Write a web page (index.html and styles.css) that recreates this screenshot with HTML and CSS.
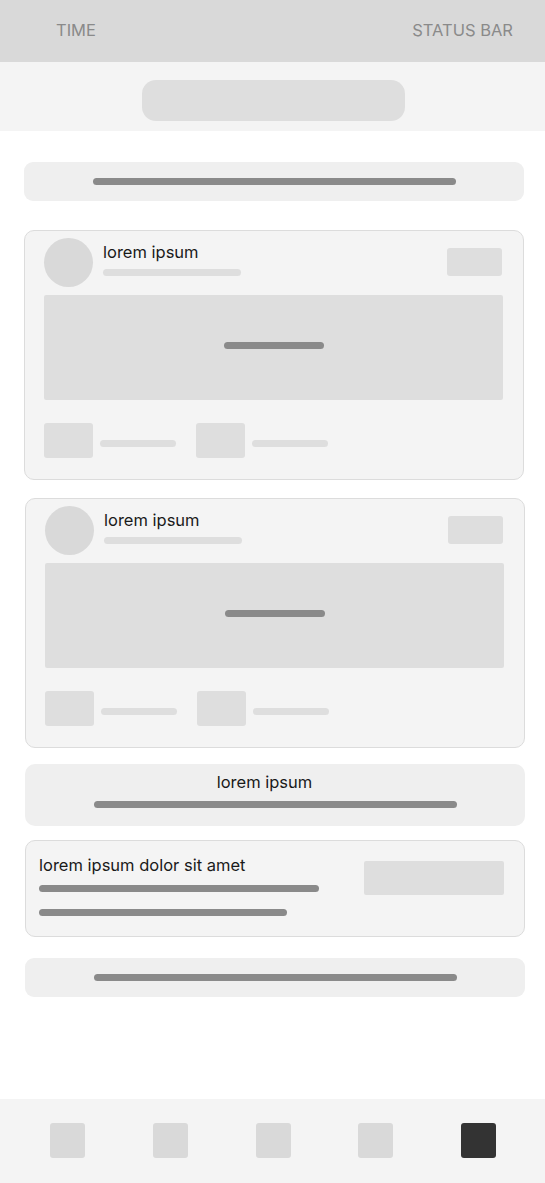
FILE: index.html
```html
<!DOCTYPE html>
<html lang="en">
<head>
<meta charset="utf-8">
<title>Feed wireframe</title>
<link rel="stylesheet" href="styles.css">
</head>
<body>
<div class="screen">
  <header class="status-bar">
    <span>TIME</span>
    <span>STATUS BAR</span>
  </header>

  <div class="search-area">
    <div class="search-pill"></div>
  </div>

  <main class="content">
    <div class="bar bar-slim">
      <div class="line-dark line-long"></div>
    </div>

    <article class="card card-first">
      <div class="card-head">
        <div class="avatar"></div>
        <div class="head-text">
          <p class="title">lorem ipsum</p>
          <div class="sub-line"></div>
        </div>
        <div class="head-chip"></div>
      </div>
      <div class="media">
        <div class="line-dark line-short"></div>
      </div>
      <div class="card-foot">
        <div class="foot-box"></div>
        <div class="foot-line"></div>
        <div class="foot-box foot-box-second"></div>
        <div class="foot-line foot-line-second"></div>
      </div>
    </article>

    <article class="card card-second shifted">
      <div class="card-head">
        <div class="avatar"></div>
        <div class="head-text">
          <p class="title">lorem ipsum</p>
          <div class="sub-line"></div>
        </div>
        <div class="head-chip"></div>
      </div>
      <div class="media">
        <div class="line-dark line-short"></div>
      </div>
      <div class="card-foot">
        <div class="foot-box"></div>
        <div class="foot-line"></div>
        <div class="foot-box foot-box-second"></div>
        <div class="foot-line foot-line-second"></div>
      </div>
    </article>

    <section class="bar-titled shifted">
      <p class="bar-text">lorem ipsum</p>
      <div class="line-dark line-long"></div>
    </section>

    <article class="info-card shifted">
      <div class="info-text">
        <p class="title">lorem ipsum dolor sit amet</p>
        <div class="line-dark info-line-1"></div>
        <div class="line-dark info-line-2"></div>
      </div>
      <div class="info-box"></div>
    </article>

    <div class="bar bar-slim bar-last shifted">
      <div class="line-dark line-long"></div>
    </div>
  </main>

  <nav class="tab-bar">
    <div class="tab"></div>
    <div class="tab"></div>
    <div class="tab"></div>
    <div class="tab"></div>
    <div class="tab tab-active"></div>
  </nav>
</div>
</body>
</html>
```

FILE: styles.css
```css
* {
  box-sizing: border-box;
}

body {
  margin: 0;
  font-family: Inter, "Noto Sans", "Liberation Sans", sans-serif;
  background: #ffffff;
}

.screen {
  display: flex;
  flex-direction: column;
  min-height: 100vh;
}

/* status bar */
.status-bar {
  height: 62px;
  flex: none;
  background: #d9d9d9;
  color: #8a8a8a;
  font-size: 16.5px;
  display: flex;
  justify-content: space-between;
  align-items: center;
  padding: 0 32px 3px 56px;
}

/* search */
.search-area {
  height: 69px;
  flex: none;
  background: #f4f4f4;
  display: flex;
  justify-content: center;
  padding-top: 18px;
  padding-left: 2px;
}

.search-pill {
  width: 263px;
  height: 41px;
  border-radius: 14px;
  background: #dedede;
}

/* main column */
.content {
  flex: 1;
  display: flex;
  flex-direction: column;
  padding: 31px 0 0 24px;
}

.content > * {
  width: 500px;
}

.shifted {
  margin-left: 1px;
}

.line-dark {
  height: 7px;
  border-radius: 4px;
  background: #8a8a8a;
}

.line-long {
  width: 363px;
}

.line-short {
  width: 100px;
}

.bar {
  background: #efefef;
  border-radius: 9px;
  display: flex;
  justify-content: center;
  align-items: center;
}

.bar-slim {
  height: 39px;
}

.bar-last {
  margin-top: 21px;
}

/* cards */
.card {
  background: #f4f4f4;
  border: 1px solid #dcdcdc;
  border-radius: 10px;
  padding: 7px 20px 21px 19px;
}

.card-first {
  margin-top: 29px;
}

.card-second {
  margin-top: 18px;
}

.card-head {
  display: flex;
  align-items: flex-start;
}

.avatar {
  width: 49px;
  height: 49px;
  border-radius: 50%;
  background: #d9d9d9;
  flex: none;
}

.head-text {
  margin-left: 10px;
  margin-top: 4px;
}

.title {
  margin: 0;
  font-size: 16.5px;
  line-height: 20px;
  color: #1a1a1a;
}

.sub-line {
  width: 138px;
  height: 7px;
  border-radius: 4px;
  background: #dedede;
  margin-top: 7px;
}

.head-chip {
  margin-left: auto;
  margin-top: 10px;
  margin-right: 1px;
  width: 55px;
  height: 28px;
  border-radius: 3px;
  background: #dedede;
}

.media {
  margin-top: 8px;
  height: 105px;
  border-radius: 2px;
  background: #dedede;
  display: flex;
  justify-content: center;
  align-items: center;
  padding-bottom: 5px;
}

.card-foot {
  margin-top: 23px;
  display: flex;
  align-items: flex-start;
}

.foot-box {
  width: 49px;
  height: 35px;
  border-radius: 3px;
  background: #dedede;
}

.foot-box-second {
  margin-left: 20px;
}

.foot-line {
  width: 76px;
  height: 7px;
  border-radius: 4px;
  background: #dedede;
  margin: 17px 0 0 7px;
}

/* titled bar */
.bar-titled {
  margin-top: 16px;
  height: 62px;
  background: #efefef;
  border-radius: 10px;
  display: flex;
  flex-direction: column;
  align-items: center;
  padding-top: 8px;
}

.bar-text {
  margin: 0 21px 0 0;
  font-size: 16.5px;
  line-height: 20px;
  color: #1a1a1a;
}

.bar-titled .line-dark {
  margin-top: 9px;
}

/* info card */
.info-card {
  margin-top: 14px;
  height: 97px;
  background: #f4f4f4;
  border: 1px solid #dcdcdc;
  border-radius: 10px;
  padding: 14px 20px 0 13px;
  display: flex;
  justify-content: space-between;
  align-items: flex-start;
}

.info-line-1 {
  width: 280px;
  margin-top: 10px;
}

.info-line-2 {
  width: 248px;
  margin-top: 17px;
}

.info-box {
  width: 140px;
  height: 34px;
  margin-top: 6px;
  border-radius: 2px;
  background: #dedede;
}

/* tab bar */
.tab-bar {
  height: 84px;
  flex: none;
  background: #f4f4f4;
  display: flex;
  justify-content: space-between;
  align-items: flex-start;
  padding: 24px 49px 0 50px;
}

.tab {
  width: 35px;
  height: 35px;
  border-radius: 3px;
  background: #d9d9d9;
}

.tab-active {
  background: #333333;
}
```
